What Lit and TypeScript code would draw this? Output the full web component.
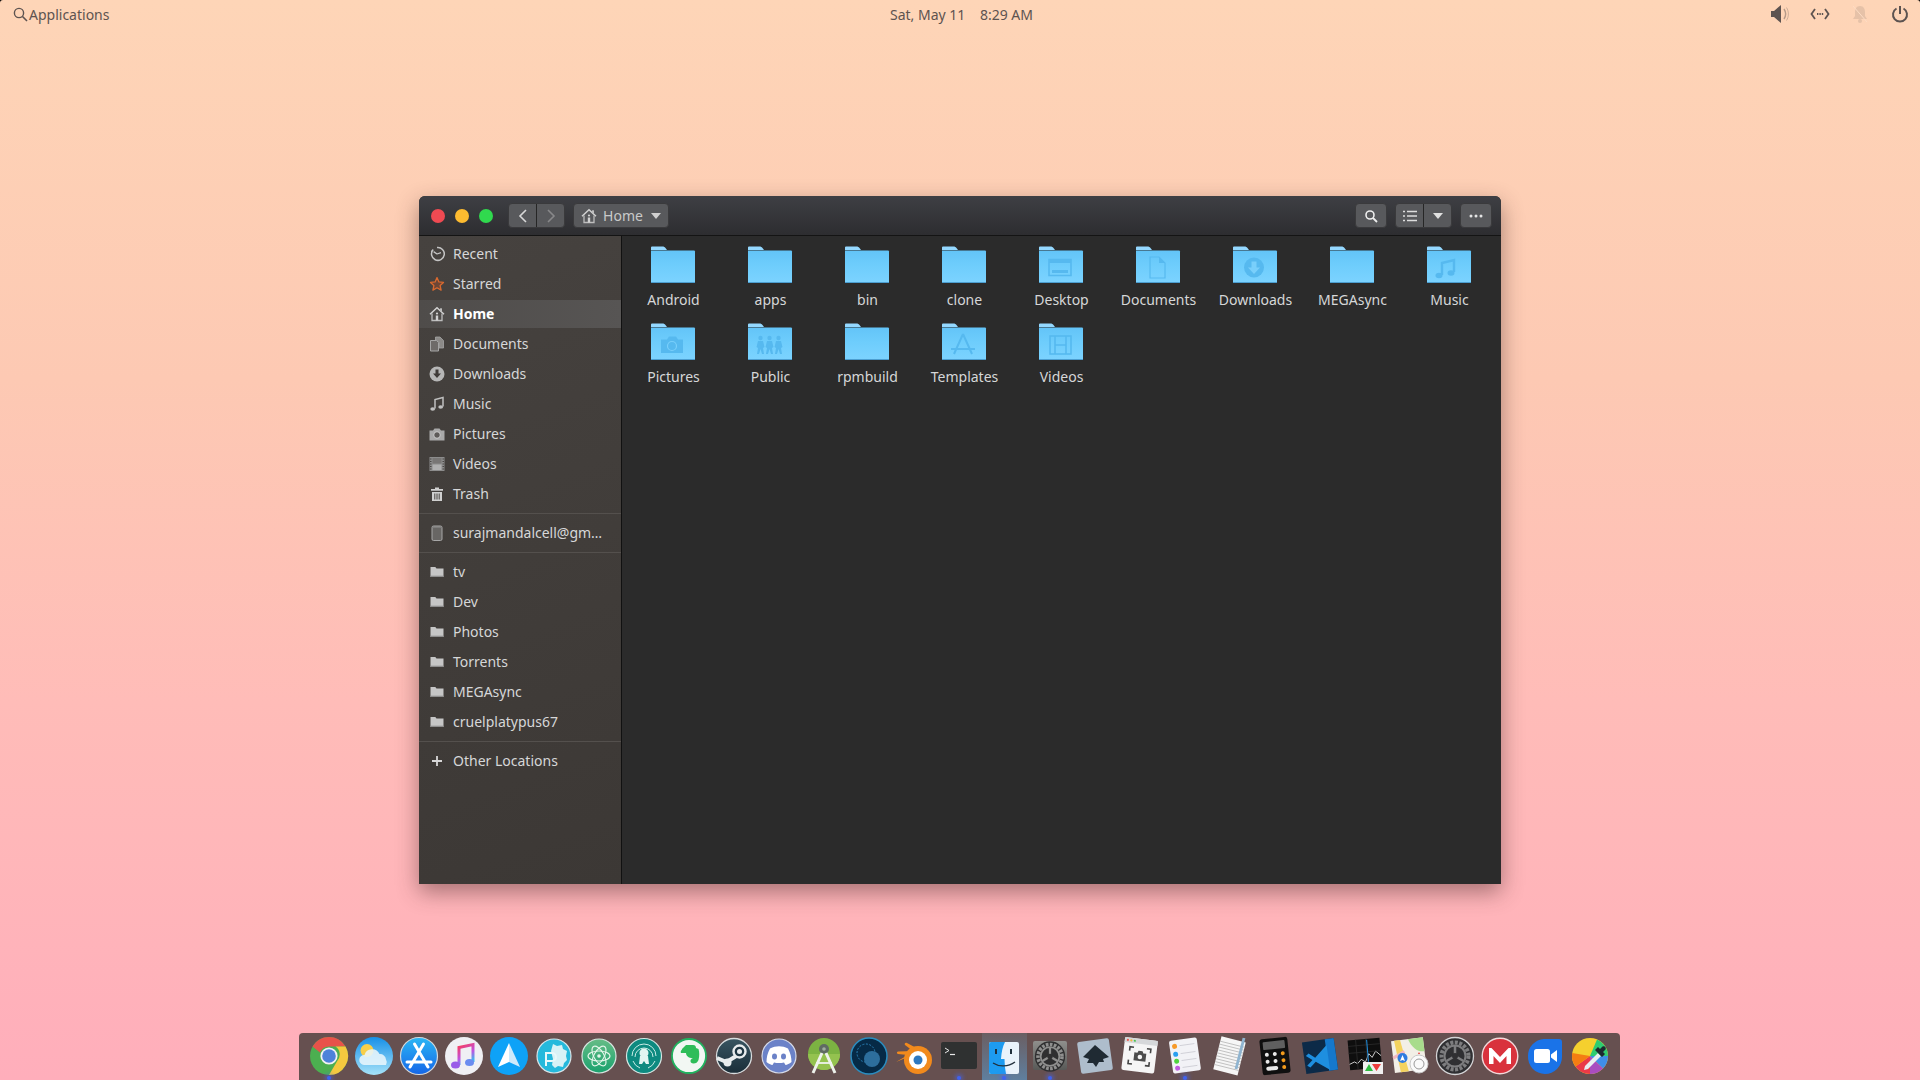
import { LitElement, html, css, svg } from "lit";
import { customElement } from "lit/decorators.js";

// small sidebar glyphs, all 16x16
const G = {
  recent: svg`<path d="M4.200 3.600A6.400 6.400 0 1 0 8 1.600" fill="none" stroke="#c4c4c4" stroke-width="1.500"/><path d="M8 8 4.600 5.600M8 8l4-1.400" stroke="#c4c4c4" stroke-width="1.300" fill="none"/><circle cx="2.600" cy="5.200" r=".7" fill="#c4c4c4"/>`,
  star: svg`<path d="M8 1.600l1.900 4.300 4.600.5-3.400 3.100 1 4.600L8 11.800l-4.100 2.300 1-4.600L1.500 6.400l4.600-.5z" fill="#6d4636" stroke="#d9692f" stroke-width="1.300" stroke-linejoin="round"/>`,
  home: svg`<path d="M1 8.200 8 1.800l7 6.400" fill="none" stroke="#d2d2d2" stroke-width="1.500"/><path d="M3 7.500v7h10v-7" fill="none" stroke="#bdbdbd" stroke-width="1.300"/><circle cx="8" cy="7.500" r="1.100" fill="#d2d2d2"/><rect x="6.800" y="9.500" width="2.400" height="5" fill="#d2d2d2"/><rect x="11" y="2.300" width="2" height="3" fill="#bdbdbd"/>`,
  docs: svg`<path d="M1.500 4.500h6l2 2V15h-8z" fill="#6e6b69" stroke="#a5a5a5"/><path d="M6.500 1H11l3.500 3.500V12H10V6.500L7.500 4h-1z" fill="#8c8a88" stroke="#a5a5a5" stroke-width=".8"/>`,
  down: svg`<circle cx="8" cy="8" r="7.500" fill="#b6b6b6"/><path d="M6.500 3.500h3v4H12L8 12 4 7.500h2.500z" fill="#3f3b39"/>`,
  music: svg`<path d="M6 12.500v-9l8-2v9" fill="none" stroke="#c0c0c0" stroke-width="1.500"/><ellipse cx="3.700" cy="13" rx="2.400" ry="1.800" fill="#c0c0c0"/><ellipse cx="11.700" cy="11" rx="2.400" ry="1.800" fill="#c0c0c0"/>`,
  pictures: svg`<path d="M.5 4.500H4l1.500-2h5l1.500 2h3.500v10H.5z" fill="#a9a9a9"/><circle cx="8" cy="9" r="3.300" fill="#5e5b59" stroke="#cfcfcf"/>`,
  videos: svg`<rect x=".5" y="1" width="15" height="14" fill="#8c8c8c"/><rect x="3.500" y="2" width="9" height="5.500" fill="#787675"/><rect x="3.500" y="8.500" width="9" height="5.500" fill="#b0b0b0"/><path d="M1 3h1.500M1 5.500h1.500M1 8h1.500M1 10.500h1.500M1 13h1.500M13.500 3H15M13.500 5.500H15M13.500 8H15M13.500 10.500H15M13.500 13H15" stroke="#4a4745" stroke-width="1"/>`,
  trash: svg`<path d="M2 3h12v1.800H2zM6 1.500h4V3H6zM3 6h10v9H3z" fill="#d0d0d0"/><path d="M5.800 7.500v6M8 7.500v6M10.200 7.500v6" stroke="#46423f" stroke-width="1"/>`,
  drive: svg`<rect x="3" y="1" width="10" height="14.500" rx="1.500" fill="#686664" stroke="#a7a7a7"/><path d="M5 1.500V3M7 1.500V3M9 1.500V3M11 1.500V3" stroke="#a7a7a7" stroke-width=".7"/>`,
  folder: svg`<path d="M1.500 3h4.800l1.200 1.500h7V13h-13z" fill="#c6c6c6"/><rect x="1.500" y="11.700" width="13" height="1.300" fill="#8f8f8f"/>`,
  plus: svg`<path d="M8 3v10M3 8h10" stroke="#d8d8d8" stroke-width="1.800"/>`,
};

type Row = { label: string; icon: keyof typeof G; active?: boolean };

const placesA: Row[] = [
  { label: "Recent", icon: "recent" },
  { label: "Starred", icon: "star" },
  { label: "Home", icon: "home", active: true },
  { label: "Documents", icon: "docs" },
  { label: "Downloads", icon: "down" },
  { label: "Music", icon: "music" },
  { label: "Pictures", icon: "pictures" },
  { label: "Videos", icon: "videos" },
  { label: "Trash", icon: "trash" },
];
const placesB: Row[] = [{ label: "surajmandalcell@gm\u2026", icon: "drive" }];
const placesC: Row[] = ["tv", "Dev", "Photos", "Torrents", "MEGAsync", "cruelplatypus67"].map((label) => ({ label, icon: "folder" as const }));
const placesD: Row[] = [{ label: "Other Locations", icon: "plus" }];

// emblems sit on the folder front, in a slightly deeper blue
const E = "#56b9ef";
const emblems: Record<string, unknown> = {
  Desktop: svg`<path d="M11 13.500h22v16H11z" fill="none" stroke="${E}" stroke-width="1.600"/><rect x="11" y="13.500" width="22" height="3.500" fill="${E}"/><rect x="14" y="24" width="16" height="3" fill="${E}"/>`,
  Documents: svg`<path d="M15 11h9l6 6v15H15z" fill="none" stroke="${E}" stroke-width="1.200"/><path d="M24 11v6h6z" fill="${E}"/>`,
  Downloads: svg`<circle cx="22" cy="21.500" r="10" fill="${E}"/><path d="M19.500 15.500h5v6H28L22 28l-6-6.500h3.500z" fill="#79cffb"/>`,
  Music: svg`<path d="M16 29V17l12-3v12" fill="none" stroke="${E}" stroke-width="2.400"/><ellipse cx="13" cy="29.500" rx="3.500" ry="2.800" fill="${E}"/><ellipse cx="25" cy="27" rx="3.500" ry="2.800" fill="${E}"/>`,
  Pictures: svg`<path d="M11 16.500h6l2-3h7l2 3h5V30H11z" fill="${E}"/><circle cx="22" cy="23" r="4.500" fill="none" stroke="#79cffb" stroke-width="1.200"/>`,
  Public: svg`<g fill="${E}"><circle cx="13.500" cy="15" r="2.200"/><circle cx="22.500" cy="15" r="2.200"/><circle cx="31.500" cy="15" r="2.200"/><path d="M11 18h5l1.500 6-1.500 1 1 6h-2l-1.500-5-1.500 5h-2l1-6-1.500-1zM20 18h5l1.500 6-1.500 1 1 6h-2l-1.500-5-1.500 5h-2l1-6-1.500-1zM29 18h5l1.500 6-1.500 1 1 6h-2l-1.500-5-1.500 5h-2l1-6-1.500-1z"/></g>`,
  Templates: svg`<path d="M22 11 13 31M22 11l9 20M10 26h24" stroke="${E}" stroke-width="2" fill="none"/>`,
  Videos: svg`<rect x="12" y="13" width="21" height="18" fill="none" stroke="${E}" stroke-width="1.600"/><path d="M17 13v18M28 13v18M17 22h11" stroke="${E}" stroke-width="1.600"/>`,
};

const files = ["Android", "apps", "bin", "clone", "Desktop", "Documents", "Downloads", "MEGAsync", "Music", "Pictures", "Public", "rpmbuild", "Templates", "Videos"];

const gear = (c: string, hub: string) => svg`
  <circle cx="20" cy="20" r="13.500" fill="none" stroke="${c}" stroke-width="4" stroke-dasharray="3 1.500"/>
  <circle cx="20" cy="20" r="10.500" fill="none" stroke="${c}" stroke-width="2"/>
  <path d="M20 20V10M20 20l-8.500 5M20 20l8.500 5" stroke="${c}" stroke-width="2.500"/>
  <circle cx="20" cy="20" r="3" fill="${hub}"/>`;

type Dock = { icon: unknown; dot?: boolean; active?: boolean };

const dock: Dock[] = [
  { dot: true, icon: svg`<circle cx="20" cy="20" r="19" fill="#4caf50"/><path d="M3.500 10.500a19 19 0 0 1 33 0H20a9.500 9.500 0 0 0-9 6z" fill="#e8524a"/><path d="M36.500 10.500A19 19 0 0 1 20 39l8.500-14.500a9.500 9.500 0 0 0-2-14z" fill="#f4c93f"/><circle cx="20" cy="20" r="8.600" fill="#f2f2f2"/><circle cx="20" cy="20" r="6.800" fill="#4d82da"/>` },
  { icon: svg`<defs><linearGradient id="d2" x1="0" y1="0" x2="0" y2="1"><stop offset="0" stop-color="#1690e8"/><stop offset="1" stop-color="#a6e2f8"/></linearGradient></defs><circle cx="20" cy="20" r="19" fill="url(#d2)"/><circle cx="13" cy="14.500" r="6.500" fill="#f7cf4a"/><path d="M10 29a5 5 0 0 1 .5-10 8 8 0 0 1 15-1 6 6 0 0 1 6.500 5.500 5 5 0 0 1 0 5.500z" fill="#e9f6fc" opacity=".88"/>` },
  { icon: svg`<defs><linearGradient id="d3" x1="0" y1="0" x2="0" y2="1"><stop offset="0" stop-color="#2bb6f4"/><stop offset="1" stop-color="#1566e8"/></linearGradient></defs><circle cx="20" cy="20" r="18.500" fill="url(#d3)" stroke="#d4d8dc" stroke-width="1.200"/><path d="M24.500 8 11 31M15.500 8 29 31M8 26h24" stroke="#fff" stroke-width="3" stroke-linecap="round"/>` },
  { icon: svg`<defs><linearGradient id="d4" x1="0" y1="0" x2=".4" y2="1"><stop offset="0" stop-color="#fb3a55"/><stop offset=".6" stop-color="#c052e0"/><stop offset="1" stop-color="#40b8f0"/></linearGradient></defs><circle cx="20" cy="20" r="19" fill="#f0f0f4"/><path d="M15 29V11.500l14-3V26" fill="none" stroke="url(#d4)" stroke-width="3"/><ellipse cx="11.500" cy="29" rx="4.500" ry="3.500" fill="#9a5ce8"/><ellipse cx="25.500" cy="26.500" rx="4.500" ry="3.500" fill="#6a8cf0"/>` },
  { icon: svg`<circle cx="20" cy="20" r="19" fill="#0ea2f7"/><path d="M20 7 31 31l-11-5z" fill="#cfe9fb"/><path d="M20 7 9 31l11-5z" fill="#fff"/>` },
  { icon: svg`<circle cx="20" cy="20" r="17" fill="#25b9dc" stroke="#d9e4e8" stroke-width="1.200"/><path d="M19 8l4 2 5-1 1 4 4 2-1 5 1 4-3 3-1 4-5-1-3 2-3-3 1-6-2-8z" fill="#d8f2f6"/><path d="M12 30V17h6a4 4 0 0 1 0 8h-6" fill="none" stroke="#e8f8fa" stroke-width="2"/>` },
  { icon: svg`<defs><linearGradient id="d7" x1="0" y1="0" x2="0" y2="1"><stop offset="0" stop-color="#66bc86"/><stop offset="1" stop-color="#1aa26e"/></linearGradient></defs><circle cx="20" cy="20" r="17" fill="url(#d7)" stroke="#d9e4e0" stroke-width="1.200"/><g fill="none" stroke="#e4f6ea" stroke-width="1.100"><ellipse cx="20" cy="20" rx="11" ry="5"/><ellipse cx="20" cy="20" rx="11" ry="5" transform="rotate(60 20 20)"/><ellipse cx="20" cy="20" rx="11" ry="5" transform="rotate(120 20 20)"/></g><circle cx="20" cy="20" r="1.800" fill="#e4f6ea"/>` },
  { icon: svg`<circle cx="20" cy="20" r="17.500" fill="#0d8a80" stroke="#d6e6e3" stroke-width="1.200"/><path d="M8 20a12 12 0 0 1 24 0M11 21a9 9 0 0 1 18 0" fill="none" stroke="#c8ece6" stroke-width="1"/><circle cx="20" cy="17" r="4.500" fill="#e2f5f2"/><path d="M16 20h8l1 8h-3l-2-3-2 3h-3z" fill="#e2f5f2"/><path d="M9 25a12 12 0 0 0 7 7M31 25a12 12 0 0 1-7 7" stroke="#c8ece6" fill="none"/>` },
  { icon: svg`<circle cx="20" cy="20" r="17" fill="#f2f7f3" stroke="#20b35f" stroke-width="1.800"/><path d="M13 13l4-4h7c2.500 0 3 1.500 3 3l2.500 1c1 3 1 7 0 11-1 2.500-2.500 3.500-5 3.500-2 0-3-1-3-2.500s1-2.500 2.500-2.500l-4-1c-2-1-3-3-3-4.500H12c-.5-1-.5-2 1-3.500z" fill="#2ebd59"/>` },
  { icon: svg`<defs><linearGradient id="d10" x1="0" y1="0" x2="0" y2="1"><stop offset="0" stop-color="#385561"/><stop offset="1" stop-color="#1a2d38"/></linearGradient></defs><circle cx="20" cy="20" r="17.500" fill="url(#d10)" stroke="#d8dcde" stroke-width="1.300"/><path d="M3 22l9.500 4 13-8" stroke="#e8eced" stroke-width="4" fill="none"/><circle cx="25.500" cy="15.500" r="6" fill="#1f3642" stroke="#e8eced" stroke-width="2.400"/><circle cx="25.500" cy="15.500" r="2.500" fill="#e8eced"/><circle cx="13.500" cy="26.500" r="4" fill="#e8eced"/>` },
  { icon: svg`<circle cx="20" cy="20" r="17" fill="#6b82c8" stroke="#d6dae8" stroke-width="1.200"/><path d="M11 12.500c6-3 12-3 18 0 2.500 4.500 3.500 9 3.500 13.500-2 1.800-4.500 2.700-6 3L25 26.500c-3.300.8-6.700.8-10 0L13.500 29c-1.500-.3-4-1.200-6-3 0-4.500 1-9 3.500-13.500z" fill="#fff"/><ellipse cx="15.500" cy="20.500" rx="2.500" ry="3" fill="#6b82c8"/><ellipse cx="24.500" cy="20.500" rx="2.500" ry="3" fill="#6b82c8"/>` },
  { icon: svg`<circle cx="20" cy="18" r="16" fill="#7cb342"/><path d="M4 18a16 16 0 0 0 32 0z" fill="#94c24f"/><circle cx="20" cy="13" r="5" fill="#5f6b63"/><circle cx="20" cy="13" r="1.800" fill="#9fae9f"/><path d="M18 17 9 37M22 17l9 20" stroke="#eef2ec" stroke-width="3"/><path d="M12 27h16" stroke="#eef2ec" stroke-width="1.800"/>` },
  { icon: svg`<circle cx="20" cy="20" r="18" fill="#062a46" stroke="#2a8dc0" stroke-width="1.500"/><circle cx="17" cy="17" r="9" fill="none" stroke="#2a82b8" stroke-dasharray="2 1.500"/><circle cx="23" cy="23" r="8" fill="#2d6e9c"/>` },
  { icon: svg`<path d="M2 26l12-7-10-1c-1.500 0-1.500-2.500 0-2.500l15-.5L11 9c-1-1.500.5-3 2-2l15 8z" fill="#f28a1c"/><circle cx="24" cy="24" r="14" fill="#f28a1c"/><circle cx="24" cy="24" r="9" fill="#fff"/><circle cx="24" cy="24" r="4.500" fill="#2d78c0"/>` },
  { dot: true, icon: svg`<rect x="2" y="6" width="36" height="27" rx="2" fill="#2f3131"/><path d="M6 12l4 2.500L6 17" stroke="#e8e8e8" stroke-width="1" fill="none"/><path d="M11 18.500h5" stroke="#e8e8e8" stroke-width="1.200"/>` },
  { dot: true, active: true, icon: svg`<rect x="5" y="6" width="30" height="32" rx="2" fill="#e9f3fb"/><path d="M7 6h14c-2.500 5-3.500 10-4 17h3.500c0 5 .5 10 1.500 15H7a2 2 0 0 1-2-2V8a2 2 0 0 1 2-2z" fill="#1d9bf0"/><path d="M12 13v5M27 13v5" stroke="#20303c" stroke-width="2"/><path d="M9 27c6 4 15 4 22-1" stroke="#20303c" stroke-width="1.300" fill="none"/>` },
  { dot: true, icon: svg`<defs><linearGradient id="d17" x1="0" y1="0" x2="0" y2="1"><stop offset="0" stop-color="#8f8f8c"/><stop offset="1" stop-color="#585957"/></linearGradient></defs><rect x="3" y="5" width="34" height="29" rx="2" fill="url(#d17)"/><g transform="translate(2.200 2.700) scale(.89)"><circle cx="20" cy="20" r="17" fill="#2f2f30"/>${gear("#8f8f8e", "#2f2f30")}</g>` },
  { icon: svg`<g transform="rotate(-8 20 20)"><rect x="4" y="4" width="32" height="32" rx="2" fill="#aebdcc"/></g><path d="M20 9 8 21l6 2-2 4h6l3 4 3-5h5l-1-3 6-2z" fill="#1f2a33"/>` },
  { icon: svg`<g transform="rotate(7 20 20)"><rect x="3" y="3" width="33" height="33" rx="2" fill="#f5f5f5"/><rect x="3" y="3" width="33" height="5" fill="#d6d8da"/><circle cx="6" cy="5.500" r="1.100" fill="#ef5a50"/><circle cx="9.500" cy="5.500" r="1.100" fill="#f3b73a"/><circle cx="13" cy="5.500" r="1.100" fill="#46c553"/><path d="M9 16v-4h4M30 16v-4h-4M9 25v4h4M30 25v4h-4" stroke="#444" stroke-width="1.600" fill="none"/><path d="M14 17h3l1-2h4l1 2h3v8H14z" fill="#4c4c4c"/><circle cx="20" cy="21" r="2.300" fill="#f5f5f5"/></g>` },
  { dot: true, icon: svg`<g transform="rotate(-8 20 20)"><rect x="6" y="3" width="28" height="33" rx="2" fill="#f2f2f6"/><circle cx="11" cy="9" r="2.500" fill="#f79a2a"/><circle cx="11" cy="17" r="2.500" fill="#2a9ff0"/><circle cx="11" cy="24" r="2.500" fill="#4fd33f"/><circle cx="11" cy="31" r="2.500" fill="#c05ae0"/><path d="M16 9h15M16 17h15M16 24h15M16 31h15" stroke="#cfcfd6" stroke-width=".9"/></g>` },
  { icon: svg`<g transform="rotate(14 20 20)"><rect x="7" y="3" width="25" height="34" fill="#f6f6f6"/><path d="M7 8h25M7 11h25M7 14h25M7 17h25M7 20h25M7 23h25M7 26h25M7 29h25M7 32h25" stroke="#b0b0b0" stroke-width=".7"/></g><path d="M34 2 26 33" stroke="#8fb4d0" stroke-width="2.800"/>` },
  { icon: svg`<g transform="rotate(-6 20 20)"><rect x="6" y="2" width="28" height="36" rx="2.500" fill="#0f0f0f"/><rect x="9" y="5" width="22" height="8" rx="1" fill="#5f5f5f"/><g fill="#e8e8e8"><circle cx="12" cy="18" r="2"/><circle cx="20" cy="18" r="2"/><circle cx="12" cy="25" r="2"/><circle cx="20" cy="25" r="2"/><rect x="10" y="30" width="12" height="4" rx="2"/></g><g fill="#f29a1c"><circle cx="28" cy="18" r="2"/><circle cx="28" cy="25" r="2"/><circle cx="28" cy="32" r="2"/></g></g>` },
  { icon: svg`<g transform="rotate(-8 20 20)"><rect x="4" y="4" width="32" height="32" fill="#0c2a48"/><path d="M27 4h9v32h-9z" fill="#1578cc"/><path d="M28 10 15 21l-6-5-3 2 6 5-6 5 3 2 6-5 13 10z" fill="#1e8fe0"/></g>` },
  { icon: svg`<g transform="rotate(-5 20 20)"><rect x="4" y="3" width="32" height="30" fill="#0e0e0e"/><path d="M4 27l5-2 3 2 4-4 4 3 4-8 3 4 4-6 5 5" fill="none" stroke="#d8d8d8" stroke-width=".9"/><path d="M4 9h32M4 16h32M12 3v30M22 3v30" stroke="#2a2a2a" stroke-width=".8"/><path d="M23 4v22" stroke="#1f8fe0" stroke-width="1"/></g><rect x="18" y="26" width="20" height="12" fill="#f0f0f0"/><path d="M24 28l4 7h-8z" fill="#2ebd40"/><path d="M27 28h9l-4.500 7z" fill="#ee3d3d"/>` },
  { icon: svg`<g transform="rotate(-7 20 20)"><rect x="3" y="3" width="32" height="32" fill="#f2efe6"/><path d="M20 3h15v14c-7 0-12-5-15-14z" fill="#a8dc8c"/><path d="M6 3h6l5 32H9z" fill="#f4d35e"/><path d="M3 20l12-5" stroke="#f2b8c0" stroke-width="3"/></g><circle cx="12.500" cy="22" r="5" fill="#2f7ce0"/><path d="M12.500 19l2.500 6-2.500-1-2.500 1z" fill="#fff"/><circle cx="29" cy="28" r="9" fill="#fafafa" stroke="#c8c8c8"/><circle cx="29" cy="28" r="5" fill="none" stroke="#999"/><path d="M28 18h2l-1-2z" fill="#e33"/>` },
  { icon: svg`<circle cx="20" cy="20" r="18.500" fill="#2f2f32" stroke="#d4d4d6" stroke-width="1.300"/>${gear("#7d7d7f", "#2f2f32")}` },
  { icon: svg`<circle cx="20" cy="20" r="17.800" fill="#d9323d" stroke="#f2d8da" stroke-width="1.400"/><path d="M9 28V12h2.500L20 21l8.500-9H31v16h-4.500v-8L20 27l-6.500-7v8z" fill="#fff"/>` },
  { icon: svg`<path d="M19 3h15a3 3 0 0 1 3 3v15a17 17 0 0 1-17 17A17 17 0 0 1 3 20 17 17 0 0 1 19 3z" fill="#1a73e8"/><rect x="9" y="13" width="16" height="14" rx="2.500" fill="#fff"/><path d="M26 18.500l6-4.500v12l-6-4.500z" fill="#fff"/>` },
  { icon: svg`<circle cx="20" cy="20" r="18" fill="#f5d02e"/><path d="M20 20 27 3.500A18 18 0 0 1 38 20z" fill="#2ecc71"/><path d="M20 20h18a18 18 0 0 1-5 12.500z" fill="#3f8ee8"/><path d="M20 20l13 12.500A18 18 0 0 1 20 38z" fill="#a84cc0"/><path d="M20 20v18A18 18 0 0 1 5.500 30.500z" fill="#ea3a48"/><path d="M20 20 5.500 30.500A18 18 0 0 1 2.200 17z" fill="#f47d12"/><path d="M15 30l13-13 3 3-13 13-4 1z" fill="#e8eef2"/><path d="M25 14l3-3 2 2 2.500-2.500c2-1 4 1 3 3L33 16l2 2-3 3z" fill="#1e2a30"/>` },
];

@customElement("app-root")
export class AppRoot extends LitElement {
  static styles = css`
    :host {
      display: block;
      height: 1080px;
      background: #000;
      font-family: "Noto Sans", sans-serif;
      overflow: hidden;
    }
    .desktop {
      height: 1080px;
      display: flex;
      flex-direction: column;
      border-radius: 3px 3px 0 0;
      background: linear-gradient(180deg, #fed5b7 0%, #fdc9b3 35%, #ffbcb8 65%, #ffaebb 100%);
    }
    .topbar {
      height: 28px;
      padding: 0 10px 2px 13px;
      display: grid;
      grid-template-columns: 1fr auto 1fr;
      align-items: center;
      color: #5d5350;
      font-size: 14px;
      flex: none;
    }
    .apps { display: flex; align-items: center; gap: 1px; }
    .clock { white-space: pre; }
    .tray { display: flex; justify-content: flex-end; gap: 20px; }
    .tray svg { display: block; width: 20px; height: 20px; }
    .stage { flex: 1; padding-top: 166px; }
    .window {
      width: 1082px;
      height: 688px;
      margin: 0 auto;
      border-radius: 6px 6px 0 0;
      background: #2b2b2b;
      box-shadow: 0 8px 22px rgba(60, 30, 30, 0.45);
      display: flex;
      flex-direction: column;
      overflow: hidden;
      color: #d6d7d8;
      font-size: 14px;
    }
    .titlebar {
      height: 39px;
      flex: none;
      display: flex;
      align-items: center;
      padding: 0 9px 0 12px;
      background: linear-gradient(180deg, #3e3f44, #2d2d30);
      border-bottom: 1px solid #141414;
    }
    .lights { display: flex; gap: 10px; margin-right: 15px; }
    .lights i { width: 14px; height: 14px; border-radius: 50%; }
    .btn {
      height: 25px;
      box-sizing: border-box;
      border-radius: 4px;
      background: #58595c;
      border: 1px solid #3a3a3c;
      display: flex;
      align-items: center;
      justify-content: center;
      color: #c9c9c9;
    }
    .group { display: flex; width: 57px; height: 25px; border-radius: 4px; background: #58595c; border: 1px solid #3a3a3c; box-sizing: border-box; }
    .group span { flex: 1; display: flex; align-items: center; justify-content: center; }
    .group span + span { border-left: 1px solid #262626; }
    .path { width: 96px; margin-left: 8px; gap: 6px; }
    .spacer { flex: 1; }
    .search, .more { width: 32px; }
    .views { margin: 0 8px; }
    .body { flex: 1; display: flex; min-height: 0; }
    .sidebar {
      width: 202px;
      flex: none;
      padding-top: 4px;
      background: linear-gradient(160deg, #46423f, #3c3835);
      border-right: 1px solid #111;
    }
    .row {
      height: 28px;
      margin-bottom: 2px;
      display: flex;
      align-items: center;
      gap: 8px;
      padding-left: 10px;
      white-space: nowrap;
    }
    .row svg { width: 16px; height: 16px; flex: none; margin-bottom: 1px; }
    .row span { margin-bottom: 2px; }
    .row.active { background: linear-gradient(90deg, #4f4c4a, #575554); color: #fff; font-weight: 700; }
    .sep { height: 1px; margin: 5px 0; background: #54504d; }
    .files {
      flex: 1;
      display: grid;
      grid-template-columns: repeat(9, 97px);
      grid-auto-rows: 77px;
      align-content: start;
      padding: 10px 0 0 3px;
    }
    .file { display: flex; flex-direction: column; align-items: center; gap: 6px; }
    .file svg { width: 46px; height: 38px; flex: none; display: block; margin-left: -2px; }
    .file span { line-height: 20px; white-space: nowrap; }
    .dock {
      flex: none;
      align-self: flex-start;
      margin-left: 299px;
      width: 1321px;
      height: 47px;
      box-sizing: border-box;
      padding: 0 7.5px;
      background: #665050;
      border-radius: 4px 4px 0 0;
      display: flex;
    }
    .slot {
      flex: 1;
      position: relative;
      display: flex;
      justify-content: center;
      padding-top: 3px;
    }
    .slot svg { width: 40px; height: 40px; display: block; }
    .slot.active { background: linear-gradient(180deg, #6a5e62, #5f7f9e); }
    .slot.dot::after {
      content: "";
      position: absolute;
      left: 50%;
      bottom: 0;
      width: 4px;
      height: 4px;
      margin-left: -2px;
      border-radius: 50%;
      background: #3f62f0;
      box-shadow: 0 0 4px 2px rgba(70, 100, 240, 0.55);
    }
  `;

  private rows(list: Row[]) {
    return list.map(
      (r) => html`<div class="row ${r.active ? "active" : ""}">
        <svg viewBox="0 0 16 16">${G[r.icon]}</svg><span>${r.label}</span>
      </div>`
    );
  }

  private folder(name: string) {
    return html`<div class="file">
      <svg viewBox="0 0 46 38">
        <path d="M1 1.500a1 1 0 0 1 1-1h10.500c1.500 0 2 .5 3 1.500l1.500 2H1z" fill="#94d8ff"/>
        <path d="M1 4.500h43a1 1 0 0 1 1 1V36a1 1 0 0 1-1 1H2a1 1 0 0 1-1-1z" fill="url(#fold)"/>
        <rect x="1" y="36" width="44" height="1" fill="#4c9ed0"/>
        ${emblems[name] ?? ""}
        <defs><linearGradient id="fold" x1="0" y1="0" x2="0" y2="1"><stop offset="0" stop-color="#63c4f8"/><stop offset=".45" stop-color="#6ecdfc"/><stop offset="1" stop-color="#7cd3ff"/></linearGradient></defs>
      </svg>
      <span>${name}</span>
    </div>`;
  }

  render() {
    return html`<div class="desktop">
      <div class="topbar">
        <div class="apps">
          <svg width="15" height="15" viewBox="0 0 15 15"><circle cx="6" cy="6" r="4.600" fill="none" stroke="#5d5350" stroke-width="1.400"/><path d="M9.500 9.500 14 14" stroke="#5d5350" stroke-width="1.600"/></svg>
          <span>Applications</span>
        </div>
        <div class="clock">Sat, May 11    8:29 AM</div>
        <div class="tray">
          <svg viewBox="0 0 20 20"><path d="M1 7h3l7-6v18l-7-6H1z" fill="#5d5350"/><path d="M14 5c2 3 2 7 0 10" fill="none" stroke="#5d5350" stroke-width="1.400" opacity=".45"/><path d="M16.500 3.500c2.500 4 2.500 9 0 13" fill="none" stroke="#5d5350" stroke-width="1" opacity=".3"/></svg>
          <svg viewBox="0 0 20 20"><path d="M5 5 1.500 10 5 15M15 5l3.500 5L15 15" fill="none" stroke="#5d5350" stroke-width="1.800"/><path d="M7 10h1.400M9.400 10h1.400M11.800 10h1.400" stroke="#5d5350" stroke-width="2"/></svg>
          <svg viewBox="0 0 20 20" opacity=".2"><path d="M10 2c-3.500 0-5 3-5 6v4l-2 3h14l-2-3V8c0-3-1.500-6-5-6z" fill="#8a7a70"/><circle cx="10" cy="17" r="2" fill="#8a7a70"/><path d="M3 2l14 16" stroke="#fff" stroke-width="1"/></svg>
          <svg viewBox="0 0 20 20"><path d="M6.500 4.500a7 7 0 1 0 7 0" fill="none" stroke="#5d5350" stroke-width="2"/><path d="M10 2v8" stroke="#5d5350" stroke-width="2"/></svg>
        </div>
      </div>
      <div class="stage">
        <div class="window">
          <div class="titlebar">
            <div class="lights">
              <i style="background:#ef4a52"></i><i style="background:#fdbb30"></i><i style="background:#30d94e"></i>
            </div>
            <div class="group">
              <span><svg width="10" height="14" viewBox="0 0 10 14"><path d="M8 1 2 7l6 6" fill="none" stroke="#d8d8d8" stroke-width="1.600"/></svg></span>
              <span><svg width="10" height="14" viewBox="0 0 10 14"><path d="M2 1l6 6-6 6" fill="none" stroke="#88888a" stroke-width="1.600"/></svg></span>
            </div>
            <div class="btn path">
              <svg width="16" height="16" viewBox="0 0 16 16">${G.home}</svg><span>Home</span>
              <svg width="10" height="6" viewBox="0 0 10 6" style="margin-left:2px"><path d="M0 0h10L5 6z" fill="#d0d0d0"/></svg>
            </div>
            <div class="spacer"></div>
            <div class="btn search">
              <svg width="14" height="14" viewBox="0 0 14 14"><circle cx="6" cy="6" r="4" fill="none" stroke="#eee" stroke-width="1.600"/><path d="M9 9l4 4" stroke="#eee" stroke-width="1.800"/></svg>
            </div>
            <div class="group views">
              <span><svg width="14" height="12" viewBox="0 0 14 12"><path d="M0 1.500h2M4 1.500h10M0 6h2M4 6h10M0 10.500h2M4 10.500h10" stroke="#ddd" stroke-width="1.600"/></svg></span>
              <span><svg width="10" height="6" viewBox="0 0 10 6"><path d="M0 0h10L5 6z" fill="#e0e0e0"/></svg></span>
            </div>
            <div class="btn more">
              <svg width="14" height="4" viewBox="0 0 14 4"><circle cx="2" cy="2" r="1.500" fill="#e4e4e4"/><circle cx="7" cy="2" r="1.500" fill="#e4e4e4"/><circle cx="12" cy="2" r="1.500" fill="#e4e4e4"/></svg>
            </div>
          </div>
          <div class="body">
            <div class="sidebar">
              ${this.rows(placesA)}
              <div class="sep"></div>
              ${this.rows(placesB)}
              <div class="sep"></div>
              ${this.rows(placesC)}
              <div class="sep"></div>
              ${this.rows(placesD)}
            </div>
            <div class="files">${files.map((f) => this.folder(f))}</div>
          </div>
        </div>
      </div>
      <div class="dock">
        ${dock.map(
          (d) => html`<div class="slot ${d.dot ? "dot" : ""} ${d.active ? "active" : ""}"><svg viewBox="0 0 40 40">${d.icon}</svg></div>`
        )}
      </div>
    </div>`;
  }
}
